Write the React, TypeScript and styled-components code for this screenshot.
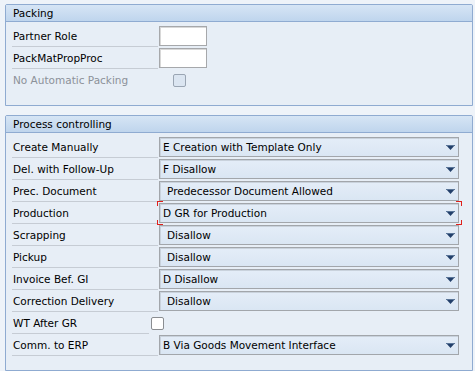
import React from 'react'
import styled, { createGlobalStyle } from 'styled-components'

const GlobalStyle = createGlobalStyle`
  body {
    margin: 0;
    background: #eef3f9;
    font-family: 'DejaVu Sans', sans-serif;
    font-size: 10.5px;
    color: #000;
  }
`

const Page = styled.div`
  display: flex;
  flex-direction: column;
  gap: 9px;
  width: 468px;
  padding: 4px 0 0 5px;
`

const Group = styled.section`
  border: 1px solid #8fabd1;
  border-radius: 2px 2px 0 0;
  background: #e7eef6;
`

const GroupHeader = styled.div`
  height: 16px;
  line-height: 16px;
  padding-left: 7px;
  background: linear-gradient(#d6e5f5, #bfd5ed);
  border-bottom: 1px solid #8fabd1;
`

const GroupBody = styled.div`
  display: flex;
  flex-direction: column;
  padding: 3px 0 14px 6px;
`

const Row = styled.div`
  display: flex;
  align-items: center;
  height: 22px;
`

const Label = styled.div<{ $width?: number; $plain?: boolean; $disabled?: boolean }>`
  box-sizing: border-box;
  width: ${p => p.$width ?? 146}px;
  height: 22px;
  line-height: 22px;
  padding-left: 1px;
  white-space: nowrap;
  color: ${p => (p.$disabled ? '#8c9199' : '#000')};
  border-bottom: 1px solid ${p => (p.$plain ? 'transparent' : '#c6ccd4')};
`

const TextInput = styled.div`
  box-sizing: border-box;
  width: 48px;
  height: 20px;
  margin-left: 1px;
  background: #fff;
  border: 1px solid #a6a8ab;
  box-shadow: inset 1px 1px 0 #d8d8d8;
`

const Check = styled.div<{ $disabled?: boolean; $offset: number }>`
  box-sizing: border-box;
  width: 13px;
  height: 13px;
  margin-left: ${p => p.$offset}px;
  border-radius: 2px;
  border: 1px solid ${p => (p.$disabled ? '#9aa5b3' : '#8a8d91')};
  background: ${p => (p.$disabled ? '#dbe5f1' : '#fff')};
`

const SelectFrame = styled.div`
  position: relative;
  margin-left: 1px;
`

const SelectBox = styled.div<{ $indent: number }>`
  box-sizing: border-box;
  width: 300px;
  height: 20px;
  display: flex;
  align-items: center;
  justify-content: space-between;
  padding: 0 3px 0 ${p => p.$indent}px;
  border: 1px solid #a2a6ab;
  box-shadow: inset 1px 1px 0 #c9d2dc;
  background: linear-gradient(#e4edf8, #dae6f3);
  white-space: nowrap;
`

const Corner = styled.span<{ $top: boolean; $left: boolean }>`
  position: absolute;
  width: 5px;
  height: 4px;
  ${p => (p.$top ? 'top: -2px;' : 'bottom: -2px;')}
  ${p => (p.$left ? 'left: -2px;' : 'right: -3px;')}
  border-color: #e0201b;
  border-style: solid;
  border-width: ${p => `${p.$top ? 1 : 0}px ${p.$left ? 0 : 1}px ${p.$top ? 0 : 1}px ${p.$left ? 1 : 0}px`};
`

const Arrow = () => (
  <svg width="9" height="5" viewBox="0 0 9 5">
    <path d="M0 0 H9 L4.5 5 Z" fill="#223f6a" />
    <path d="M0 0.5 H9" stroke="#5a7598" strokeWidth="1" />
  </svg>
)

const Select = ({ value, indent = 3, focused }: { value: string; indent?: number; focused?: boolean }) => (
  <SelectFrame>
    <SelectBox $indent={indent}>
      <span>{value}</span>
      <Arrow />
    </SelectBox>
    {focused && (
      <>
        <Corner $top $left />
        <Corner $top $left={false} />
        <Corner $top={false} $left />
        <Corner $top={false} $left={false} />
      </>
    )}
  </SelectFrame>
)

const processRows = [
  { label: 'Create Manually', value: 'E Creation with Template Only' },
  { label: 'Del. with Follow-Up', value: 'F Disallow' },
  { label: 'Prec. Document', value: 'Predecessor Document Allowed', indent: 7 },
  { label: 'Production', value: 'D GR for Production', focused: true },
  { label: 'Scrapping', value: 'Disallow', indent: 7 },
  { label: 'Pickup', value: 'Disallow', indent: 7 },
  { label: 'Invoice Bef. GI', value: 'D Disallow' },
  { label: 'Correction Delivery', value: 'Disallow', indent: 7 },
]

export default function App() {
  return (
    <>
      <GlobalStyle />
      <Page>
        <Group>
          <GroupHeader>Packing</GroupHeader>
          <GroupBody>
            <Row>
              <Label>Partner Role</Label>
              <TextInput />
            </Row>
            <Row>
              <Label>PackMatPropProc</Label>
              <TextInput />
            </Row>
            <Row>
              <Label $plain $disabled>No Automatic Packing</Label>
              <Check $disabled $offset={15} />
            </Row>
          </GroupBody>
        </Group>

        <Group>
          <GroupHeader>Process controlling</GroupHeader>
          <GroupBody>
            {processRows.map(r => (
              <Row key={r.label}>
                <Label>{r.label}</Label>
                <Select value={r.value} indent={r.indent} focused={r.focused} />
              </Row>
            ))}
            <Row>
              <Label $width={137}>WT After GR</Label>
              <Check $offset={2} />
            </Row>
            <Row>
              <Label>Comm. to ERP</Label>
              <Select value="B Via Goods Movement Interface" />
            </Row>
          </GroupBody>
        </Group>
      </Page>
    </>
  )
}
